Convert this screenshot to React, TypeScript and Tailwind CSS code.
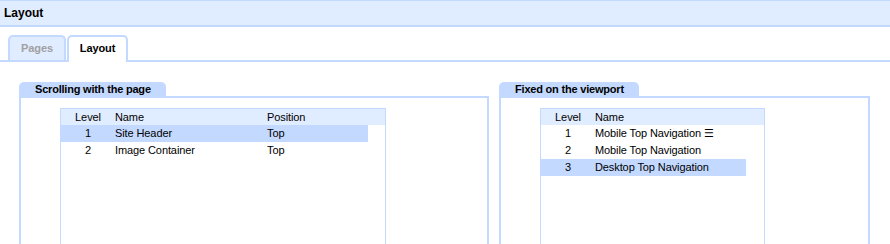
import React from "react";

type Row = { level: string; name: string; position?: string; selected?: boolean };

function Table({ rows, withPosition }: { rows: Row[]; withPosition: boolean }) {
  return (
    <div className="mt-[10px] ml-[39px] w-fit border border-[#c3d9ff] pr-[17px] h-[200px] self-start">
      <div className="flex h-[16px] items-center bg-[#e0ecff] -mr-[17px] pr-[17px]">
        <div className="w-[54px] text-center">Level</div>
        <div className="w-[152px]">Name</div>
        {withPosition && <div className="w-[101px]">Position</div>}
      </div>
      {rows.map((r) => (
        <div
          key={r.level}
          className={`flex h-[17px] items-center w-fit ${r.selected ? "bg-[#c3d9ff]" : ""}`}
        >
          <div className="w-[54px] text-center">{r.level}</div>
          <div className={withPosition ? "w-[152px]" : "w-[151px]"}>{r.name}</div>
          {withPosition && <div className="w-[101px]">{r.position}</div>}
        </div>
      ))}
    </div>
  );
}

function Panel({ title, width, children }: { title: string; width: string; children: React.ReactNode }) {
  return (
    <div className={`flex flex-col ${width}`}>
      <div className="self-start h-[14px] rounded-t-[5px] bg-[#c3d9ff] pl-[16px] pr-[15px] text-[11px] font-bold leading-[14px] tracking-[-0.2px] text-black">
        {title}
      </div>
      <div className="flex h-[220px] border-x-2 border-t-2 border-[#c3d9ff] bg-white">{children}</div>
    </div>
  );
}

export default function App() {
  return (
    <div
      className="h-[244px] w-[890px] overflow-hidden bg-white text-[11px] tracking-[-0.1px] text-black"
      style={{ fontFamily: '"Liberation Sans", Arial, "DejaVu Sans", sans-serif' }}
    >
      <div className="h-[27px] border-t border-b-2 border-[#c3d9ff] bg-[#e0ecff] pl-[4px] text-[12px] font-bold leading-[24px] tracking-normal">
        Layout
      </div>
      <div className="mt-[8px] flex h-[27px] items-stretch border-b-2 border-[#c3d9ff] pl-[8px]">
        <div className="flex h-[25px] w-[58px] items-center justify-center rounded-t-[5px] border-x-2 border-t-2 border-[#c3d9ff] bg-[#e0ecff] text-[11px] font-bold text-[#a0a0a0]">
          Pages
        </div>
        <div className="ml-[1px] flex h-[27px] w-[61px] items-center justify-center rounded-t-[5px] border-x-2 border-t-2 border-[#c3d9ff] bg-white pb-[2px] text-[11px] font-bold text-black">
          Layout
        </div>
      </div>
      <div className="mt-[20px] flex gap-[10px] pl-[19px]">
        <Panel title="Scrolling with the page" width="w-[470px]">
          <Table
            withPosition
            rows={[
              { level: "1", name: "Site Header", position: "Top", selected: true },
              { level: "2", name: "Image Container", position: "Top" },
            ]}
          />
        </Panel>
        <Panel title="Fixed on the viewport" width="w-[371px]">
          <Table
            withPosition={false}
            rows={[
              { level: "1", name: "Mobile Top Navigation ☰" },
              { level: "2", name: "Mobile Top Navigation" },
              { level: "3", name: "Desktop Top Navigation", selected: true },
            ]}
          />
        </Panel>
      </div>
    </div>
  );
}
